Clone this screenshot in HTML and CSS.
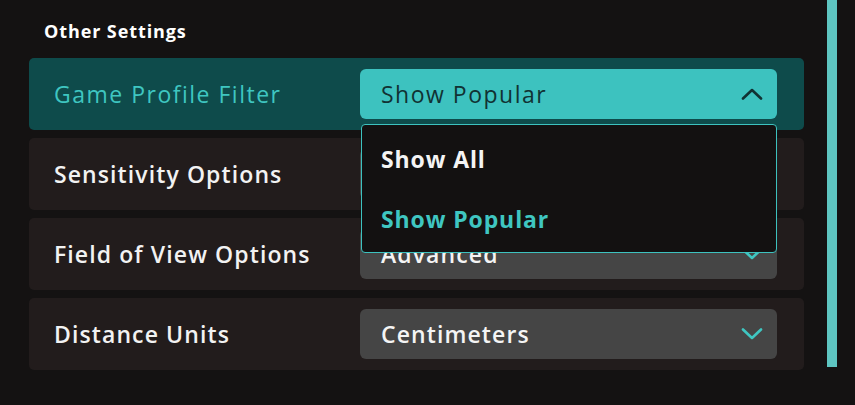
FILE: index.html
```html
<!DOCTYPE html>
<html lang="en">
<head>
<meta charset="utf-8">
<title>Other Settings</title>
<link rel="stylesheet" href="styles.css">
</head>
<body>
<div class="page">
  <main class="panel">
    <h2 class="section-title">Other Settings</h2>
    <div class="rows">
      <div class="row row-active">
        <span class="label">Game Profile Filter</span>
        <div class="select-wrap">
          <div class="select select-open">
            <span class="value">Show Popular</span>
            <svg class="chev" viewBox="0 0 22 12" width="22" height="12"><path d="M2 10.5 L11 2 L20 10.5" fill="none" stroke="currentColor" stroke-width="2.6" stroke-linecap="round" stroke-linejoin="round"/></svg>
          </div>
          <ul class="menu">
            <li class="option">Show All</li>
            <li class="option option-selected">Show Popular</li>
          </ul>
        </div>
      </div>
      <div class="row">
        <span class="label">Sensitivity Options</span>
        <div class="select-wrap">
          <div class="select"></div>
        </div>
      </div>
      <div class="row">
        <span class="label">Field of View Options</span>
        <div class="select-wrap">
          <div class="select">
            <span class="value">Advanced</span>
            <svg class="chev" viewBox="0 0 22 12" width="22" height="12"><path d="M2 1.5 L11 10 L20 1.5" fill="none" stroke="currentColor" stroke-width="2.6" stroke-linecap="round" stroke-linejoin="round"/></svg>
          </div>
        </div>
      </div>
      <div class="row">
        <span class="label">Distance Units</span>
        <div class="select-wrap">
          <div class="select">
            <span class="value">Centimeters</span>
            <svg class="chev" viewBox="0 0 22 12" width="22" height="12"><path d="M2 1.5 L11 10 L20 1.5" fill="none" stroke="currentColor" stroke-width="2.6" stroke-linecap="round" stroke-linejoin="round"/></svg>
          </div>
        </div>
      </div>
    </div>
  </main>
  <div class="scrollbar"></div>
</div>
</body>
</html>
```
FILE: styles.css
```css
* { box-sizing: border-box; }
html, body { margin: 0; padding: 0; }
body {
  background: #141212;
  font-family: "Open Sans", "Noto Sans", sans-serif;
  color: #f2f2f2;
  width: 855px;
  height: 405px;
  overflow: hidden;
}
.page {
  display: flex;
  align-items: flex-start;
  padding-left: 29px;
}
.panel {
  width: 775px;
}
.section-title {
  margin: 0;
  padding: 19px 0 0 15px;
  height: 58px;
  font-size: 18px;
  font-weight: 700;
  line-height: 24px;
  color: #ffffff;
  letter-spacing: 0.9px;
  font-variant-ligatures: none;
}
.rows {
  display: flex;
  flex-direction: column;
  gap: 8px;
}
.row {
  height: 72px;
  background: #221c1c;
  border-radius: 5px;
  display: flex;
  align-items: center;
  padding: 0 27px 0 25px;
}
.row-active {
  background: #0e4b4b;
}
.label {
  width: 306px;
  font-size: 23px;
  font-weight: 600;
  color: #f2f2f2;
  letter-spacing: 1.1px;
  white-space: nowrap;
}
.row-active .label {
  color: #3fc6c1;
  font-weight: 500;
  letter-spacing: 1.5px;
}
.select-wrap {
  position: relative;
  flex: 1;
}
.select {
  height: 50px;
  border-radius: 6px;
  background: #454545;
  display: flex;
  align-items: center;
  justify-content: space-between;
  padding: 0 14px 0 21px;
  color: #f4f4f4;
  font-size: 23px;
  font-weight: 600;
  letter-spacing: 1.1px;
}
.select .chev { color: #3fc6c1; }
.select-open {
  background: #3dc2bf;
  color: #113233;
  font-weight: 400;
  letter-spacing: 1.5px;
}
.select-open .chev { color: #113233; }
.menu {
  position: absolute;
  z-index: 2;
  top: 55px;
  left: 1px;
  right: 0;
  height: 129px;
  margin: 0;
  padding: 4px 0 5px;
  list-style: none;
  background: #131111;
  border: 1px solid #3dc2bf;
  border-radius: 4px;
}
.option {
  height: 60px;
  display: flex;
  align-items: center;
  padding-left: 19px;
  font-size: 23px;
  font-weight: 700;
  color: #f4f4f4;
  letter-spacing: 0.9px;
}
.option-selected {
  color: #3fc6c1;
}
.scrollbar {
  margin-left: 23px;
  width: 10px;
  height: 367px;
  background: #5ec5c1;
}
```
